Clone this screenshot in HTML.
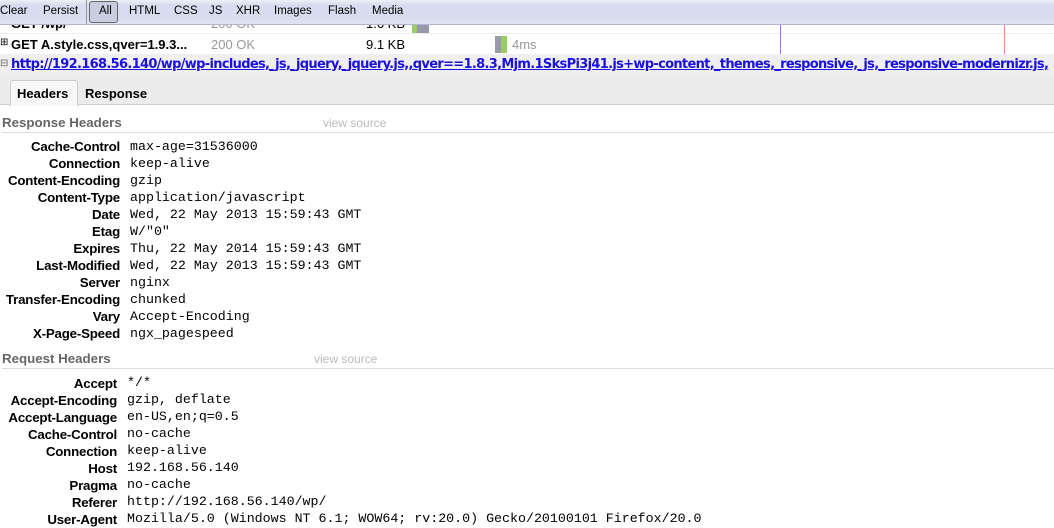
<!DOCTYPE html>
<html><head><style>
body{margin:0;width:1054px;height:528px;overflow:hidden;background:#fff;font-family:"Liberation Sans",sans-serif;position:relative}
.a{position:absolute;white-space:nowrap}
.tb{left:0;top:0;width:1054px;height:24px;background:linear-gradient(#eef0f8 0,#d7dcee 5px,#d7dcee 16px,#dfe3f3 24px);border-bottom:1px solid #b0b6d0}
.tb span{position:absolute;top:5px;font-size:11.5px;color:#000}
.lbl{font-weight:bold;font-size:13.3px;text-align:right;color:#000;letter-spacing:-0.2px}
.val{font-family:"Liberation Mono",monospace;font-size:13.3px;color:#000}
.sec{font-weight:bold;font-size:13.3px;color:#666}
.vs{font-size:12px;color:#bbb}
</style></head><body>
<div class="a tb">
<span style="left:0">Clear</span>
<span style="left:43px">Persist</span>
<div class="a" style="left:86px;top:0;width:1px;height:24px;background:#999"></div>
<div class="a" style="left:89px;top:1px;width:27px;height:20px;border:1px solid #666;border-radius:3px;background:#c8cde0"></div>
<span style="left:99px">All</span>
<span style="left:129px">HTML</span>
<span style="left:174px">CSS</span>
<span style="left:209px">JS</span>
<span style="left:236px">XHR</span>
<span style="left:274px">Images</span>
<span style="left:328px">Flash</span>
<span style="left:372px">Media</span>
</div>
<div class="a" style="left:0;top:25px;width:1054px;height:8px;overflow:hidden;border-bottom:1px solid #eee">
<div class="a" style="left:11px;top:-9px;font-weight:bold;font-size:13px">GET /wp/</div>
<div class="a" style="left:211px;top:-9px;font-size:13px;color:#999">200 OK</div>
<div class="a" style="left:366px;top:-9px;font-size:13px">1.6 KB</div>
<div class="a" style="left:412px;top:0;width:5px;height:8px;background:#9c6"></div>
<div class="a" style="left:417px;top:0;width:12px;height:8px;background:#99a"></div>
</div>
<div class="a" style="left:780px;top:25px;width:1px;height:50px;background:#8877ee"></div>
<div class="a" style="left:1004px;top:25px;width:1px;height:50px;background:#e8907e"></div>
<div class="a" style="left:0;top:37px;font-size:10px">⊞</div>
<div class="a" style="left:11px;top:37px;font-weight:bold;font-size:13px">GET A.style.css,qver=1.9.3...</div>
<div class="a" style="left:211px;top:37px;font-size:13px;color:#999">200 OK</div>
<div class="a" style="left:366px;top:37px;font-size:13px">9.1 KB</div>
<div class="a" style="left:495px;top:36px;width:6px;height:17px;background:#99a"></div>
<div class="a" style="left:501px;top:36px;width:6px;height:17px;background:#9c6"></div>
<div class="a" style="left:512px;top:37px;font-size:13px;color:#999">4ms</div>
<div class="a" style="left:0;top:54px;width:1054px;height:21px;background:#efefef"></div>
<div class="a" style="left:0;top:58px;font-size:10px;color:#666">⊟</div>
<div class="a" style="left:11px;top:57px;font-weight:bold;font-size:13px;color:#1a10e0;text-decoration:underline;font-family:'DejaVu Sans','Liberation Sans',sans-serif;letter-spacing:-0.68px">http://192.168.56.140/wp/wp-includes,_js,_jquery,_jquery.js,,qver==1.8.3,Mjm.1SksPi3j41.js+wp-content,_themes,_responsive,_js,_responsive-modernizr.js,</div>
<div class="a" style="left:0;top:75px;width:1054px;height:29px;background:#ececec;border-bottom:1px solid #ccc"></div>
<div class="a" style="left:10px;top:80px;width:66px;height:25px;background:#f7f7f7;border:1px solid #ccc;border-bottom:none;border-radius:3px 3px 0 0"></div>
<div class="a" style="left:17px;top:86px;font-weight:bold;font-size:13px">Headers</div>
<div class="a" style="left:85px;top:86px;font-weight:bold;font-size:13px">Response</div>

<div class="a sec" style="left:2px;top:115px">Response Headers</div>
<div class="a vs" style="left:323px;top:116px">view source</div>
<div class="a" style="left:2px;top:132px;width:1052px;height:1px;background:#ddd"></div>

<div class="a" style="left:0;top:138px;width:120px">
<div class="lbl" style="line-height:17px">Cache-Control<br>Connection<br>Content-Encoding<br>Content-Type<br>Date<br>Etag<br>Expires<br>Last-Modified<br>Server<br>Transfer-Encoding<br>Vary<br>X-Page-Speed</div></div>
<div class="a val" style="left:130px;top:138px;line-height:17px">max-age=31536000<br>keep-alive<br>gzip<br>application/javascript<br>Wed, 22 May 2013 15:59:43 GMT<br>W/"0"<br>Thu, 22 May 2014 15:59:43 GMT<br>Wed, 22 May 2013 15:59:43 GMT<br>nginx<br>chunked<br>Accept-Encoding<br>ngx_pagespeed</div>

<div class="a sec" style="left:2px;top:351px">Request Headers</div>
<div class="a vs" style="left:314px;top:352px">view source</div>
<div class="a" style="left:2px;top:368px;width:1052px;height:1px;background:#ddd"></div>

<div class="a" style="left:0;top:375px;width:117px">
<div class="lbl" style="line-height:17px">Accept<br>Accept-Encoding<br>Accept-Language<br>Cache-Control<br>Connection<br>Host<br>Pragma<br>Referer<br>User-Agent</div></div>
<div class="a val" style="left:127px;top:374px;line-height:17px">*/*<br>gzip, deflate<br>en-US,en;q=0.5<br>no-cache<br>keep-alive<br>192.168.56.140<br>no-cache<br>http://192.168.56.140/wp/<br>Mozilla/5.0 (Windows NT 6.1; WOW64; rv:20.0) Gecko/20100101 Firefox/20.0</div>
</body></html>
